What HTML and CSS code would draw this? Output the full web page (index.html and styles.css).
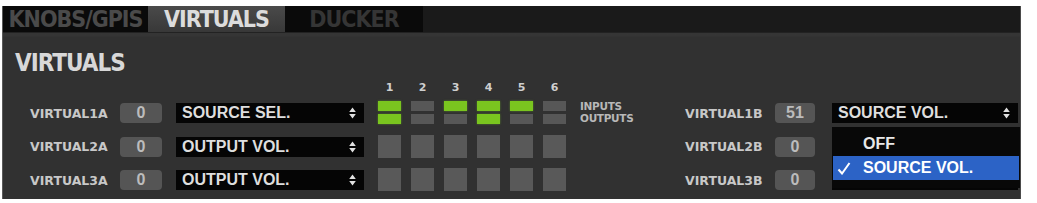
FILE: index.html
```html
<!DOCTYPE html>
<html lang="en">
  <head>
    <meta charset="UTF-8" />
    <title>Virtuals</title>
    <link rel="stylesheet" href="styles.css">
  </head>
  <body>
    <div class="window">
      <div class="tabs">
        <div class="tab tab-dim tab-knobs">KNOBS/GPIS</div>
        <div class="tab tab-active tab-virtuals">VIRTUALS</div>
        <div class="tab tab-dim tab-ducker">DUCKER</div>
      </div>

      <div class="content">
        <h1>VIRTUALS</h1>

        <div class="board">
          <div class="channels channels-a">
            <div class="channel">
              <span class="ch-label">VIRTUAL1A</span>
              <span class="ch-value">0</span>
              <div class="select">
                <span>SOURCE SEL.</span>
                <svg class="updown" width="7" height="12" viewBox="0 0 7 12"><path d="M3.5 0.5 L6.8 5 H0.2 Z M3.5 11.5 L6.8 7 H0.2 Z" fill="#e0e0e0"/></svg>
              </div>
            </div>
            <div class="channel">
              <span class="ch-label">VIRTUAL2A</span>
              <span class="ch-value">0</span>
              <div class="select">
                <span>OUTPUT VOL.</span>
                <svg class="updown" width="7" height="12" viewBox="0 0 7 12"><path d="M3.5 0.5 L6.8 5 H0.2 Z M3.5 11.5 L6.8 7 H0.2 Z" fill="#e0e0e0"/></svg>
              </div>
            </div>
            <div class="channel">
              <span class="ch-label">VIRTUAL3A</span>
              <span class="ch-value">0</span>
              <div class="select">
                <span>OUTPUT VOL.</span>
                <svg class="updown" width="7" height="12" viewBox="0 0 7 12"><path d="M3.5 0.5 L6.8 5 H0.2 Z M3.5 11.5 L6.8 7 H0.2 Z" fill="#e0e0e0"/></svg>
              </div>
            </div>
          </div>

          <div class="matrix">
            <div class="matrix-head">
              <span>1</span><span>2</span><span>3</span><span>4</span><span>5</span><span>6</span>
            </div>
            <div class="matrix-grid">
              <!-- row 1: input / output bars -->
              <div class="split"><i class="bar on"></i><i class="bar on"></i></div>
              <div class="split"><i class="bar"></i><i class="bar"></i></div>
              <div class="split"><i class="bar on"></i><i class="bar"></i></div>
              <div class="split"><i class="bar on"></i><i class="bar on"></i></div>
              <div class="split"><i class="bar on"></i><i class="bar"></i></div>
              <div class="split"><i class="bar"></i><i class="bar"></i></div>

              <div class="cell"></div><div class="cell"></div><div class="cell"></div>
              <div class="cell"></div><div class="cell"></div><div class="cell"></div>

              <div class="cell"></div><div class="cell"></div><div class="cell"></div>
              <div class="cell"></div><div class="cell"></div><div class="cell"></div>

              <div class="cell"></div><div class="cell"></div><div class="cell"></div>
              <div class="cell"></div><div class="cell"></div><div class="cell"></div>
            </div>
          </div>

          <div class="io-legend">
            <span>INPUTS</span>
            <span>OUTPUTS</span>
          </div>

          <div class="channels channels-b">
            <div class="channel">
              <span class="ch-label">VIRTUAL1B</span>
              <span class="ch-value">51</span>
              <div class="select">
                <span>SOURCE VOL.</span>
                <svg class="updown" width="7" height="12" viewBox="0 0 7 12"><path d="M3.5 0.5 L6.8 5 H0.2 Z M3.5 11.5 L6.8 7 H0.2 Z" fill="#e0e0e0"/></svg>
                <div class="menu">
                  <div class="menu-item">OFF</div>
                  <div class="menu-item selected">
                    <svg class="check" width="14" height="13" viewBox="0 0 14 13"><path d="M1.5 7.5 L5 11.5 L12.5 1" fill="none" stroke="#fff" stroke-width="2"/></svg>
                    SOURCE VOL.
                  </div>
                </div>
              </div>
            </div>
            <div class="channel">
              <span class="ch-label">VIRTUAL2B</span>
              <span class="ch-value">0</span>
              <div class="select"></div>
            </div>
            <div class="channel">
              <span class="ch-label">VIRTUAL3B</span>
              <span class="ch-value">0</span>
              <div class="select"></div>
            </div>
          </div>
        </div>
      </div>
    </div>
  </body>
</html>
```

FILE: styles.css
```css
body {
  margin: 0;
  background: #fff;
  font-family: "DejaVu Sans", sans-serif;
}

.window {
  margin: 6px 0 0 2px;
  width: 1017px;
  height: 193px;
  background: linear-gradient(#373737 0, #353535 30px, #313131 31px, #313131 100%);
  border-left: 1px solid #5a5a5a;
  border-right: 1px solid #4a4a4a;
  overflow: hidden;
}

.tabs {
  display: flex;
  height: 27px;
  background: #1a1a1a;
  border-bottom: 1px solid #222;
  box-sizing: border-box;
}

.tab {
  font-family: "DejaVu Sans Condensed", "DejaVu Sans", sans-serif;
  font-weight: bold;
  font-size: 23px;
  letter-spacing: -1px;
  line-height: 26px;
  text-align: center;
}

.tab-dim {
  background: #0a0a0a;
  color: #3c3c3c;
}

.tab-knobs {
  width: 145px;
  color: #4a4a4a;
}

.tab-virtuals {
  width: 137px;
}

.tab-ducker {
  width: 138px;
  color: #353535;
}

.tab-active {
  background: linear-gradient(#4a4a4a, #383838);
  color: #dcdcdc;
}

.content {
  padding: 17px 0 0 12px;
}

h1 {
  margin: 0;
  font-family: "DejaVu Sans Condensed", "DejaVu Sans", sans-serif;
  font-size: 24px;
  letter-spacing: -1px;
  line-height: 27px;
  color: #d8d8d8;
}

.board {
  display: flex;
  margin: 4px 0 0 15px;
}

.channels {
  display: flex;
  flex-direction: column;
  gap: 13.5px;
  padding-top: 22px;
}

.channel {
  display: flex;
  align-items: center;
  height: 20px;
}

.ch-label {
  width: 90px;
  font-weight: bold;
  font-size: 12.5px;
  color: #c8c8c8;
}

.ch-value {
  width: 42px;
  height: 20px;
  margin-right: 14px;
  border-radius: 4px;
  background: #555;
  color: #bcbcbc;
  font-family: "Liberation Sans", Arial, sans-serif;
  font-weight: bold;
  font-size: 16px;
  line-height: 20px;
  text-align: center;
}

.select {
  position: relative;
  display: flex;
  align-items: center;
  justify-content: space-between;
  width: 188px;
  height: 20px;
  box-sizing: border-box;
  padding: 0 8px 0 6px;
  background: #050505;
  color: #dedede;
  font-family: "Liberation Sans", Arial, sans-serif;
  font-weight: bold;
  font-size: 16px;
  line-height: 20px;
}

.updown {
  display: block;
}

.matrix {
  margin-left: 14px;
}

.matrix-head {
  display: grid;
  grid-template-columns: repeat(6, 23px);
  column-gap: 10px;
  height: 20px;
  font-weight: bold;
  font-size: 11px;
  line-height: 14px;
  color: #cfcfcf;
  text-align: center;
}

.matrix-grid {
  display: grid;
  grid-template-columns: repeat(6, 23px);
  grid-auto-rows: 23px;
  column-gap: 10px;
  row-gap: 10.5px;
}

.cell {
  background: #595959;
}

.split {
  display: flex;
  flex-direction: column;
  justify-content: space-between;
}

.bar {
  display: block;
  height: 10px;
  background: #575757;
}

.bar.on {
  background: #7ac51f;
  box-shadow: 0 0 2px rgba(122, 197, 31, 0.5);
}

.io-legend {
  display: flex;
  flex-direction: column;
  width: 105px;
  margin-left: 14px;
  padding-top: 20px;
  font-weight: bold;
  font-size: 10.5px;
  line-height: 11.5px;
  color: #b8b8b8;
  letter-spacing: -0.3px;
}

.channels-b .ch-value {
  width: 40px;
  margin-right: 17px;
}

.channels-b .select {
  width: 186px;
}

.menu {
  position: absolute;
  top: 24px;
  left: 0;
  z-index: 2;
  width: 188px;
  height: 61px;
  box-sizing: border-box;
  padding: 4px 1px 0;
  background: #080808;
}

.menu-item {
  position: relative;
  height: 25px;
  padding-left: 30px;
  line-height: 25px;
  color: #e8e8e8;
}

.menu-item.selected {
  height: 24px;
  line-height: 24px;
  background: #2c63c6;
  color: #fff;
}

.check {
  position: absolute;
  left: 4px;
  top: 6px;
}
```
